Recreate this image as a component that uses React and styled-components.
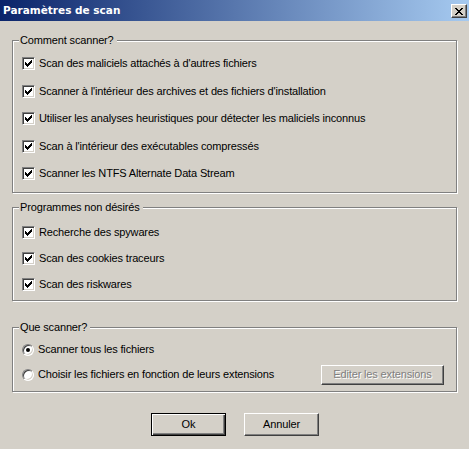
import React from "react";
import styled, { createGlobalStyle } from "styled-components";

const GlobalStyle = createGlobalStyle`
  html, body {
    margin: 0;
    padding: 0;
    background: #d4d0c8;
  }
`;

const Window = styled.div`
  width: 469px;
  height: 449px;
  background: #d4d0c8;
  font-family: "Liberation Sans", Arial, sans-serif;
  font-size: 11px;
  letter-spacing: -0.15px;
  color: #000;
  overflow: hidden;
`;

const TitleBar = styled.div`
  height: 21px;
  display: flex;
  align-items: center;
  justify-content: space-between;
  padding: 0 2px 1px 3px;
  box-sizing: border-box;
  background: linear-gradient(to right, #0a246a, #a6caf0);
`;

const Title = styled.span`
  font-family: "DejaVu Sans", Verdana, sans-serif;
  font-weight: bold;
  font-size: 10.5px;
  letter-spacing: 0;
  color: #fff;
`;

const CloseButton = styled.div`
  width: 16px;
  height: 14px;
  box-sizing: border-box;
  margin-top: 2px;
  background: #d4d0c8;
  border: 1px solid;
  border-color: #fff #404040 #404040 #fff;
  box-shadow: inset -1px -1px 0 #808080;
  display: flex;
  align-items: center;
  justify-content: center;
`;

const Content = styled.div`
  display: flex;
  flex-direction: column;
  padding: 0 12px;
`;

const Group = styled.div`
  position: relative;
  margin-top: ${p => p.mt}px;
  padding: ${p => p.pt}px 9px ${p => p.pb}px;
  border: 1px solid #808080;
  box-shadow: inset 1px 1px 0 #fff, 1px 1px 0 #fff;
  display: flex;
  flex-direction: column;
  gap: ${p => p.gap}px;
`;

const GroupTitle = styled.span`
  position: absolute;
  top: -8px;
  left: 6px;
  line-height: 14px;
  padding: 0 3px 0 1px;
  background: #d4d0c8;
`;

const Row = styled.label`
  display: flex;
  align-items: center;
  gap: 4px;
  height: ${p => p.h || 13}px;
  line-height: 13px;
  white-space: nowrap;
`;

const Box = styled.span`
  width: 13px;
  height: 13px;
  box-sizing: border-box;
  flex: none;
  background: #fff;
  border: 1px solid;
  border-color: #808080 #fff #fff #808080;
  box-shadow: inset 1px 1px 0 #404040, inset -1px -1px 0 #d4d0c8;

  svg {
    display: block;
  }
`;

const Radio = styled.span`
  position: relative;
  width: 12px;
  height: 12px;
  box-sizing: border-box;
  flex: none;
  border-radius: 50%;
  background: #fff;
  border: 1px solid;
  border-color: #808080 #fff #fff #808080;
  box-shadow: inset 1px 1px 0 #404040, inset -1px -1px 0 #d4d0c8;

  &::after {
    content: "";
    display: ${p => (p.checked ? "block" : "none")};
    position: absolute;
    left: 3px;
    top: 3px;
    width: 4px;
    height: 4px;
    border-radius: 50%;
    background: #000;
  }
`;

const Spacer = styled.span`
  flex: 1;
`;

const Button = styled.div`
  width: ${p => p.w}px;
  height: ${p => p.h}px;
  box-sizing: border-box;
  display: flex;
  align-items: center;
  justify-content: center;
  background: #d4d0c8;
  border: 1px solid;
  border-color: ${p => (p.primary ? "#000" : "#fff #404040 #404040 #fff")};
  box-shadow: ${p =>
    p.primary
      ? "inset 1px 1px 0 #fff, inset -1px -1px 0 #404040, inset -2px -2px 0 #808080"
      : "inset -1px -1px 0 #808080"};
  color: ${p => (p.disabled ? "#808080" : "#000")};
  text-shadow: ${p => (p.disabled ? "1px 1px 0 #fff" : "none")};
  margin-right: ${p => p.mr || 0}px;
`;

const ButtonBar = styled.div`
  display: flex;
  justify-content: center;
  gap: 18px;
  margin-top: 21px;
  padding-left: 1px;
`;

const checkCols = [
  [2, 4], [3, 5], [4, 6], [5, 5], [6, 4], [7, 3], [8, 2]
];

function Checkbox({ children }) {
  return (
    <Row>
      <Box>
        <svg width="11" height="11" viewBox="0 0 11 11">
          {checkCols.map(([x, y]) => (
            <rect key={x} x={x} y={y} width="1" height="3" fill="#000" />
          ))}
        </svg>
      </Box>
      {children}
    </Row>
  );
}

const closePixels = [
  [0, 0], [1, 0], [6, 0], [7, 0],
  [1, 1], [2, 1], [5, 1], [6, 1],
  [2, 2], [3, 2], [4, 2], [5, 2],
  [3, 3], [4, 3],
  [2, 4], [3, 4], [4, 4], [5, 4],
  [1, 5], [2, 5], [5, 5], [6, 5],
  [0, 6], [1, 6], [6, 6], [7, 6]
];

export default function App() {
  return (
    <>
      <GlobalStyle />
      <Window>
        <TitleBar>
          <Title>Paramètres de scan</Title>
          <CloseButton>
            <svg width="8" height="7" viewBox="0 0 8 7">
              {closePixels.map(([x, y]) => (
                <rect key={`${x}-${y}`} x={x} y={y} width="1" height="1" fill="#000" />
              ))}
            </svg>
          </CloseButton>
        </TitleBar>
        <Content>
          <Group mt={19} pt={16} pb={12} gap={14.6}>
            <GroupTitle>Comment scanner?</GroupTitle>
            <Checkbox>Scan des maliciels attachés à d'autres fichiers</Checkbox>
            <Checkbox>Scanner à l'intérieur des archives et des fichiers d'installation</Checkbox>
            <Checkbox>Utiliser les analyses heuristiques pour détecter les maliciels inconnus</Checkbox>
            <Checkbox>Scan à l'intérieur des exécutables compressés</Checkbox>
            <Checkbox>Scanner les NTFS Alternate Data Stream</Checkbox>
          </Group>
          <Group mt={14} pt={18} pb={9} gap={12.8}>
            <GroupTitle>Programmes non désirés</GroupTitle>
            <Checkbox>Recherche des spywares</Checkbox>
            <Checkbox>Scan des cookies traceurs</Checkbox>
            <Checkbox>Scan des riskwares</Checkbox>
          </Group>
          <Group mt={26} pt={16} pb={6} gap={9}>
            <GroupTitle>Que scanner?</GroupTitle>
            <Row h={12}>
              <Radio checked />
              Scanner tous les fichiers
            </Row>
            <Row h={20}>
              <Radio />
              Choisir les fichiers en fonction de leurs extensions
              <Spacer />
              <Button w={123} h={20} mr={3} disabled>
                Editer les extensions
              </Button>
            </Row>
          </Group>
          <ButtonBar>
            <Button w={75} h={23} primary>
              Ok
            </Button>
            <Button w={75} h={23}>
              Annuler
            </Button>
          </ButtonBar>
        </Content>
      </Window>
    </>
  );
}
